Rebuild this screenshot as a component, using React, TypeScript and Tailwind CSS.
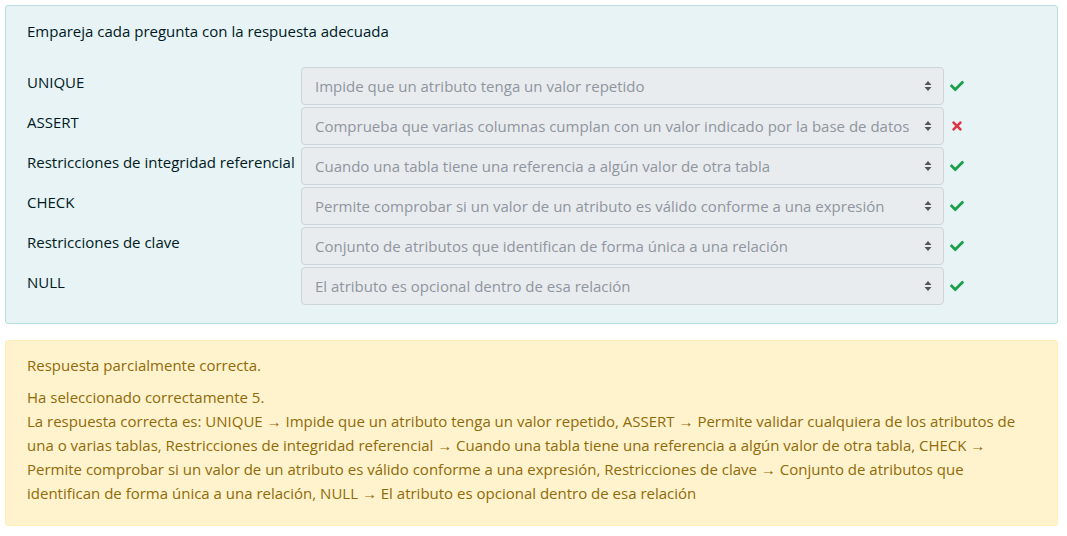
import { FaCheck, FaTimes } from "react-icons/fa";

const rows = [
  { label: "UNIQUE", value: "Impide que un atributo tenga un valor repetido", ok: true },
  { label: "ASSERT", value: "Comprueba que varias columnas cumplan con un valor indicado por la base de datos", ok: false },
  { label: "Restricciones de integridad referencial", value: "Cuando una tabla tiene una referencia a algún valor de otra tabla", ok: true },
  { label: "CHECK", value: "Permite comprobar si un valor de un atributo es válido conforme a una expresión", ok: true },
  { label: "Restricciones de clave", value: "Conjunto de atributos que identifican de forma única a una relación", ok: true },
  { label: "NULL", value: "El atributo es opcional dentro de esa relación", ok: true },
];

function Arrows() {
  return (
    <svg width="8" height="12" viewBox="0 0 8 12" className="shrink-0">
      <path d="M4 1 L7.5 5 H0.5 Z" fill="#555" />
      <path d="M4 11 L7.5 7 H0.5 Z" fill="#555" />
    </svg>
  );
}

export default function App() {
  return (
    <div className="bg-white w-[1067px] h-[536px] p-[5px] pr-[9px] text-[15px] leading-6 font-['Segoe_UI','Open_Sans',sans-serif]">
      {/* Formulation */}
      <div className="bg-[#e7f3f5] border border-[#b8dce2] rounded-[3px] px-[21px] pt-[13px] pb-[18px] text-[#001a1e]">
        <p className="mb-[24px]">Empareja cada pregunta con la respuesta adecuada</p>
        <div className="flex flex-col gap-[2px]">
          {rows.map((r) => (
            <div key={r.label} className="flex items-start">
              <div className="w-[274px] shrink-0 whitespace-nowrap pt-[3px]">{r.label}</div>
              <div className="w-[643px] h-[38px] flex items-center justify-between bg-[#e9ecef] border border-[#ced4da] rounded-[4px] pl-[13px] pr-[11px] text-[#8f959e]">
                <span className="whitespace-nowrap">{r.value}</span>
                <Arrows />
              </div>
              <div className="h-[38px] flex items-center pl-[6px]">
                {r.ok ? (
                  <FaCheck className="text-[#1e9e4a] w-[14px] h-[14px]" />
                ) : (
                  <FaTimes className="text-[#dc3545] w-[12px] h-[14px] ml-[1px]" />
                )}
              </div>
            </div>
          ))}
        </div>
      </div>

      {/* Outcome */}
      <div className="mt-[16px] bg-[#fff3cd] border border-[#ffeeba] rounded-[3px] px-[21px] pt-[12px] pb-[20px] text-[#8f6a08]">
        <p className="mb-[8px]">Respuesta parcialmente correcta.</p>
        <p>Ha seleccionado correctamente 5.</p>
        <p>
          La respuesta correcta es: UNIQUE → Impide que un atributo tenga un valor repetido, ASSERT → Permite validar cualquiera de los atributos de una o varias tablas, Restricciones de integridad referencial → Cuando una tabla tiene una referencia a algún valor de otra tabla, CHECK → Permite comprobar si un valor de un atributo es válido conforme a una expresión, Restricciones de clave → Conjunto de atributos que identifican de forma única a una relación, NULL → El atributo es opcional dentro de esa relación
        </p>
      </div>
    </div>
  );
}
